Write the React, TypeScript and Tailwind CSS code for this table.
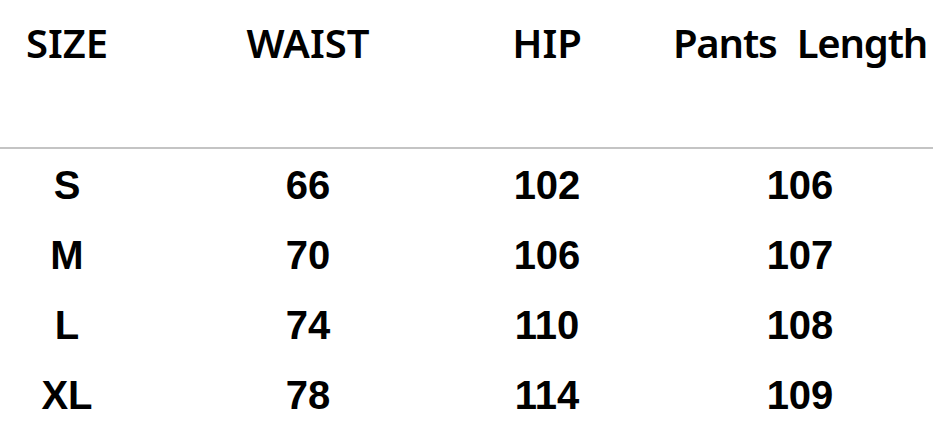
const headers = ['SIZE', 'WAIST', 'HIP'];

const rows = [
  ['S', '66', '102', '106'],
  ['M', '70', '106', '107'],
  ['L', '74', '110', '108'],
  ['XL', '78', '114', '109'],
];

const headFont = { fontFamily: '"Noto Sans", "Open Sans", sans-serif' };

export default function App() {
  return (
    <div className="w-[945px] h-[430px] overflow-hidden bg-white text-black">
      {/* header */}
      <div className="grid grid-cols-[134px_348px_130px_376px] h-[147px] pt-[23px]">
        {headers.map((h) => (
          <div key={h} className="text-center whitespace-nowrap text-[40px] leading-none font-semibold" style={headFont}>
            {h}
          </div>
        ))}
        <div
          className="text-center whitespace-nowrap text-[40px] leading-none font-semibold tracking-[-1.2px] [word-spacing:11px]"
          style={headFont}
        >
          Pants Length
        </div>
      </div>
      <div className="w-[933px] h-[2px] bg-[#c4c4c4]" />
      {/* body */}
      <div className="pt-px">
        {rows.map((r) => (
          <div
            key={r[0]}
            className="grid grid-cols-[134px_348px_130px_376px] h-[70px] font-['Liberation_Sans',Arial,sans-serif] font-bold text-[40px] leading-[70px]"
          >
            {r.map((c, i) => (
              <div key={i} className="text-center">
                {c}
              </div>
            ))}
          </div>
        ))}
      </div>
    </div>
  );
}
